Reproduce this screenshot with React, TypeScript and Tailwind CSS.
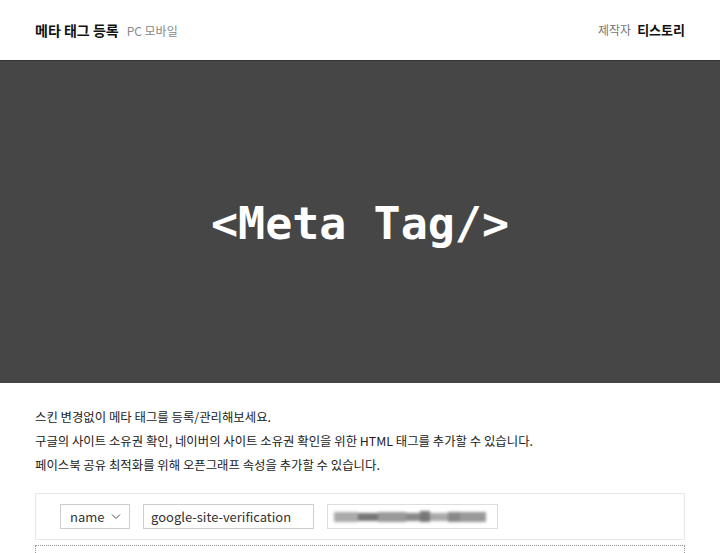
import React from 'react';

const kr = "font-['Malgun_Gothic','Noto_Sans_CJK_KR',sans-serif]";

const Header = () => (
  <div className={`flex h-[60px] items-center justify-between bg-white px-[35px] ${kr}`}>
    <div className="flex items-baseline gap-2">
      <span className="text-[14px] font-bold text-[#111]">메타 태그 등록</span>
      <span className="text-[12px] text-[#888]">PC 모바일</span>
    </div>
    <div className="flex items-baseline gap-[6px]">
      <span className="text-[12px] text-[#777]">제작자</span>
      <span className="text-[13px] font-bold text-[#111]">티스토리</span>
    </div>
  </div>
);

const Banner = () => (
  <div className="flex h-[323px] items-center justify-center border-t border-[#333] bg-[#464646]">
    <span className="pt-[4px] font-['DejaVu_Sans_Mono',monospace] text-[45px] font-bold text-white">
      &lt;Meta Tag/&gt;
    </span>
  </div>
);

// blurred-out verification value
const BlurredValue = () => (
  <div className="flex h-[25px] w-[171px] items-center border border-[#ddd] bg-white pl-[6px]">
    <div className="flex h-[12px] items-center blur-[1.5px]">
      <div className="h-[10px] w-[24px] bg-[#aaa]" />
      <div className="h-[8px] w-[20px] bg-[#777]" />
      <div className="h-[10px] w-[28px] bg-[#999]" />
      <div className="h-[8px] w-[14px] bg-[#888]" />
      <div className="h-[11px] w-[10px] bg-[#777]" />
      <div className="h-[8px] w-[18px] bg-[#aaa]" />
      <div className="h-[10px] w-[12px] bg-[#888]" />
      <div className="h-[10px] w-[26px] bg-[#999]" />
    </div>
  </div>
);

export default function App() {
  return (
    <div className="h-[553px] w-[720px] overflow-hidden bg-white">
      <Header />
      <Banner />
      <div className={`px-[35px] pt-[22px] text-[12.4px] leading-[24px] text-[#222] ${kr}`}>
        <p>스킨 변경없이 메타 태그를 등록/관리해보세요.</p>
        <p>구글의 사이트 소유권 확인, 네이버의 사이트 소유권 확인을 위한 HTML 태그를 추가할 수 있습니다.</p>
        <p>페이스북 공유 최적화를 위해 오픈그래프 속성을 추가할 수 있습니다.</p>
      </div>
      <div className="mx-[35px] mt-[16px] flex h-[47px] items-center gap-[13px] border border-[#e6e6e6] px-[24px]">
        <div className={`flex h-[25px] w-[70px] items-center justify-between border border-[#ccc] pl-[9px] pr-[8px] text-[13px] text-[#333] ${kr}`}>
          <span>name</span>
          <svg width="10" height="6" viewBox="0 0 10 6" fill="none" stroke="#555" strokeWidth="1">
            <path d="M1 0.5 L5 4.5 L9 0.5" />
          </svg>
        </div>
        <div className={`flex h-[25px] w-[171px] items-center border border-[#ccc] px-[7px] text-[13px] text-[#333] ${kr}`}>
          google-site-verification
        </div>
        <BlurredValue />
      </div>
      <div className="mx-[35px] mt-[5px] h-[20px] border border-dotted border-[#999]" />
    </div>
  );
}
